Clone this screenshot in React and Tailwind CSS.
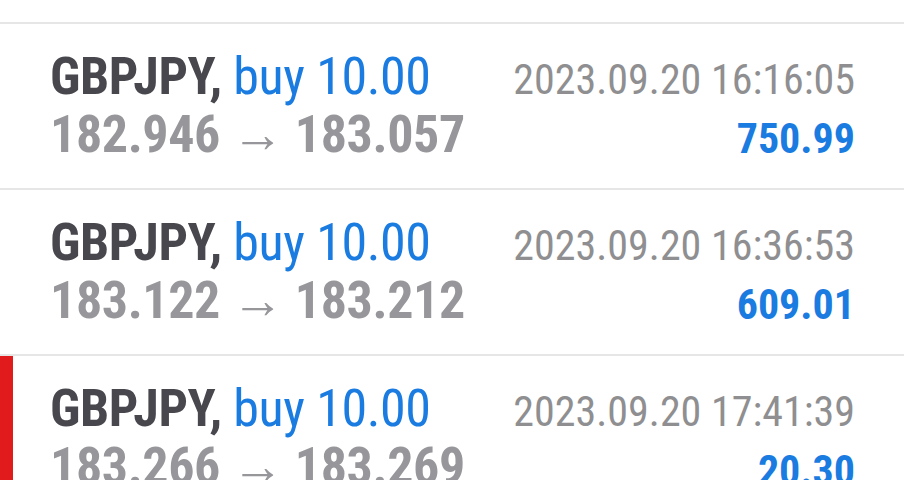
const trades = [
  { open: '182.946', close: '183.057', time: '2023.09.20 16:16:05', profit: '750.99' },
  { open: '183.122', close: '183.212', time: '2023.09.20 16:36:53', profit: '609.01' },
  { open: '183.266', close: '183.269', time: '2023.09.20 17:41:39', profit: '20.30', active: true },
];

function TradeRow({ trade }) {
  return (
    <div className="relative flex justify-between border-t-2 border-[#e6e6e6] pl-[50px] pr-[49px] pt-[24px] h-[166px]">
      {trade.active && <div className="absolute left-0 top-0 bottom-0 w-[13px] bg-[#e11b1b]" />}
      <div className="flex flex-col tracking-[-0.4px]">
        <div className="text-[52px] leading-[58px] whitespace-nowrap">
          <span className="font-bold text-[#47474d]">GBPJPY,</span>
          <span className="text-[#1a7be0]"> buy 10.00</span>
        </div>
        <div className="text-[52px] leading-[58px] font-bold text-[#97979b] whitespace-nowrap">
          {trade.open} <span className="font-normal">→</span> {trade.close}
        </div>
      </div>
      <div className="flex flex-col items-end pt-[3px]">
        <div className="text-[42px] leading-[58px] text-[#8f8f91] whitespace-nowrap">{trade.time}</div>
        <div className="text-[42px] leading-[58px] font-bold text-[#1a7be0] mt-[1px]">{trade.profit}</div>
      </div>
    </div>
  );
}

export default function App() {
  return (
    <div className="w-[904px] h-[480px] overflow-hidden bg-white font-['Roboto',sans-serif] [font-stretch:condensed]">
      <div className="h-[22px]" />
      {trades.map((t, i) => (
        <TradeRow key={i} trade={t} />
      ))}
    </div>
  );
}
